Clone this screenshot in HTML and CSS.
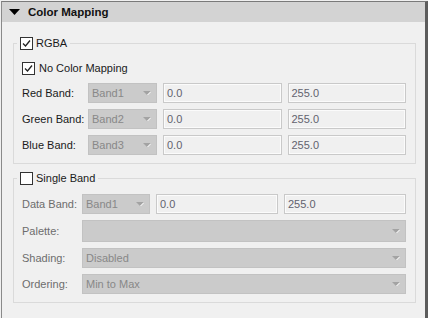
FILE: index.html
```html
<!DOCTYPE html>
<html lang="en">
<head>
    <meta charset="UTF-8">
    <title>Color Mapping</title>
    <link rel="stylesheet" href="styles.css">
</head>
<body>
    <div class="panel">
        <div class="panel-header">
            <svg class="caret" width="11" height="6" viewBox="0 0 11 6"><polygon points="0,0 11,0 5.5,6" fill="#000"/></svg>
            <span>Color Mapping</span>
        </div>

        <!-- RGBA group -->
        <fieldset class="group">
            <legend>
                <span class="check-label">
                    <span class="check"><svg width="11" height="11" viewBox="0 0 11 11"><polyline points="2,5.5 4.5,8 9,2.5" fill="none" stroke="#222" stroke-width="1.3"/></svg></span>
                    RGBA
                </span>
            </legend>
            <div class="group-body rgba-body">
                <span class="check-label option">
                    <span class="check"><svg width="11" height="11" viewBox="0 0 11 11"><polyline points="2,5.5 4.5,8 9,2.5" fill="none" stroke="#222" stroke-width="1.3"/></svg></span>
                    No Color Mapping
                </span>
                <div class="band-grid rgb-grid">
                    <span class="lbl">Red Band:</span>
                    <div class="combo"><span>Band1</span><svg class="arrow" width="8" height="5" viewBox="0 0 8 5"><polygon points="0,0 8,0 4,4" fill="#a3a3a3"/><line x1="4.5" y1="4" x2="8" y2="0.5" stroke="#fff" stroke-width="1"/></svg></div>
                    <div class="field">0.0</div>
                    <div class="field">255.0</div>

                    <span class="lbl">Green Band:</span>
                    <div class="combo"><span>Band2</span><svg class="arrow" width="8" height="5" viewBox="0 0 8 5"><polygon points="0,0 8,0 4,4" fill="#a3a3a3"/><line x1="4.5" y1="4" x2="8" y2="0.5" stroke="#fff" stroke-width="1"/></svg></div>
                    <div class="field">0.0</div>
                    <div class="field">255.0</div>

                    <span class="lbl">Blue Band:</span>
                    <div class="combo"><span>Band3</span><svg class="arrow" width="8" height="5" viewBox="0 0 8 5"><polygon points="0,0 8,0 4,4" fill="#a3a3a3"/><line x1="4.5" y1="4" x2="8" y2="0.5" stroke="#fff" stroke-width="1"/></svg></div>
                    <div class="field">0.0</div>
                    <div class="field">255.0</div>
                </div>
            </div>
        </fieldset>

        <!-- Single band group (disabled) -->
        <fieldset class="group single">
            <legend>
                <span class="check-label">
                    <span class="check"></span>
                    Single Band
                </span>
            </legend>
            <div class="group-body single-body">
                <div class="band-grid single-grid">
                    <span class="lbl">Data Band:</span>
                    <div class="combo"><span>Band1</span><svg class="arrow" width="8" height="5" viewBox="0 0 8 5"><polygon points="0,0 8,0 4,4" fill="#a3a3a3"/><line x1="4.5" y1="4" x2="8" y2="0.5" stroke="#fff" stroke-width="1"/></svg></div>
                    <div class="field">0.0</div>
                    <div class="field">255.0</div>

                    <span class="lbl">Palette:</span>
                    <div class="combo wide tall"><span></span><svg class="arrow" width="8" height="5" viewBox="0 0 8 5"><polygon points="0,0 8,0 4,4" fill="#a3a3a3"/><line x1="4.5" y1="4" x2="8" y2="0.5" stroke="#fff" stroke-width="1"/></svg></div>

                    <span class="lbl">Shading:</span>
                    <div class="combo wide"><span>Disabled</span><svg class="arrow" width="8" height="5" viewBox="0 0 8 5"><polygon points="0,0 8,0 4,4" fill="#a3a3a3"/><line x1="4.5" y1="4" x2="8" y2="0.5" stroke="#fff" stroke-width="1"/></svg></div>

                    <span class="lbl">Ordering:</span>
                    <div class="combo wide"><span>Min to Max</span><svg class="arrow" width="8" height="5" viewBox="0 0 8 5"><polygon points="0,0 8,0 4,4" fill="#a3a3a3"/><line x1="4.5" y1="4" x2="8" y2="0.5" stroke="#fff" stroke-width="1"/></svg></div>
                </div>
            </div>
        </fieldset>
    </div>
</body>
</html>
```

FILE: styles.css
```css
  html, body {
      margin: 0;
      padding: 0;
      background-color: #f0f0f0;
      font-family: "Liberation Sans", Arial, sans-serif;
      font-size: 11px;
      color: #1a1a1a;
  }
  .panel {
      margin: 1px 0 0 1px;
      height: 317px;
      box-sizing: border-box;
      border-top: 1px solid #7a7a7a;
      border-left: 1px solid #8a8a8a;
      border-right: 3px solid #5c5c5c;
      overflow: hidden;
  }
  .panel-header {
      display: flex;
      align-items: center;
      height: 20px;
      padding-left: 7px;
      background-color: #d3d3d3;
      font-weight: bold;
      font-size: 11.5px;
      color: #111;
  }
  .caret {
      margin-right: 8px;
  }
  .group {
      margin: 15px 9px 0 11px;
      padding: 0 9px 8px 3px;
      border: 1px solid #dadada;
      min-width: 0;
  }
  .group.single {
      margin-top: 8px;
  }
  legend {
      padding: 0 3px;
  }
  .check-label {
      display: flex;
      align-items: center;
      height: 13px;
      line-height: 13px;
      gap: 3px;
      white-space: nowrap;
  }
  .check {
      width: 13px;
      height: 13px;
      box-sizing: border-box;
      border: 1px solid #333;
      background-color: #fff;
      display: flex;
      align-items: center;
      justify-content: center;
  }
  .group-body {
      padding-left: 5px;
  }
  .rgba-body {
      padding-top: 12px;
  }
  .option {
      gap: 4px;
  }
  .single-body {
      padding-top: 9px;
  }
  .band-grid {
      display: grid;
      row-gap: 6px;
      column-gap: 6px;
      align-items: center;
  }
  .lbl {
      white-space: nowrap;
  }
  .rgb-grid {
      margin-top: 8px;
      grid-template-columns: 60px 69px 1fr 1fr;
  }
  .single-grid {
      grid-template-columns: 54px 68px 1fr 1fr;
  }
  .single .lbl {
      color: #6d6d6d;
  }
  .combo {
      display: flex;
      align-items: center;
      justify-content: space-between;
      height: 20px;
      box-sizing: border-box;
      padding: 0 5px 0 3px;
      background-color: #cbcbcb;
      border: 1px solid #c2c2c2;
      color: #888;
  }
  .combo.wide {
      grid-column: span 3;
  }
  .combo.tall {
      height: 22px;
  }
  .field {
      height: 20px;
      box-sizing: border-box;
      padding-left: 3px;
      line-height: 18px;
      background-color: #f0f0f0;
      border: 1px solid #c9c9c9;
      box-shadow: inset 0 0 0 1px #fbfbfb;
      color: #62626e;
  }
```
